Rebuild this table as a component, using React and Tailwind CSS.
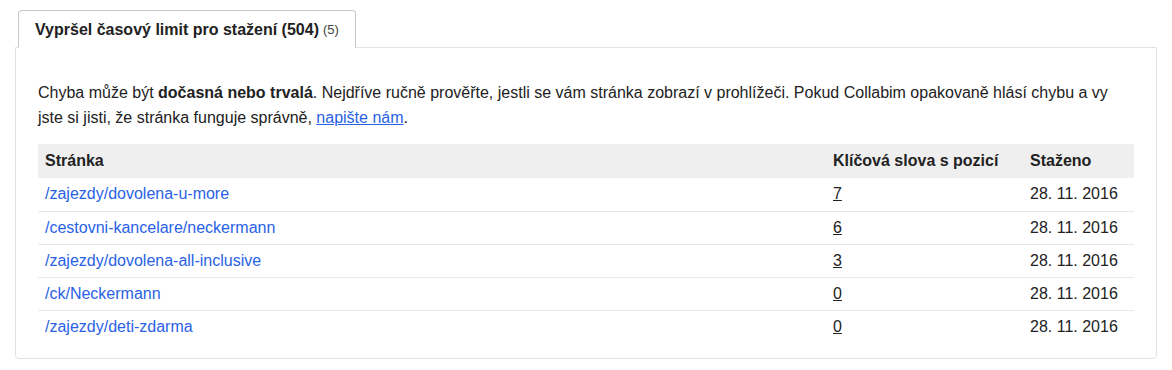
const rows = [
  { page: '/zajezdy/dovolena-u-more', keywords: 7, date: '28. 11. 2016' },
  { page: '/cestovni-kancelare/neckermann', keywords: 6, date: '28. 11. 2016' },
  { page: '/zajezdy/dovolena-all-inclusive', keywords: 3, date: '28. 11. 2016' },
  { page: '/ck/Neckermann', keywords: 0, date: '28. 11. 2016' },
  { page: '/zajezdy/deti-zdarma', keywords: 0, date: '28. 11. 2016' },
];

export default function App() {
  return (
    <div className="min-h-[370px] bg-white px-[15px] pt-[10px] text-[16px] text-[#222] font-['Liberation_Sans',Arial,sans-serif]">
      {/* Tabs */}
      <div className="flex pl-[3px]">
        <div className="relative z-10 -mb-px flex h-[38px] items-center rounded-t-[4px] border border-b-white border-[#c8c8c8] bg-white px-4 pt-px">
          <span className="font-bold">Vypršel časový limit pro stažení (504)</span>
          <span className="ml-1 text-[13px] text-[#444]">(5)</span>
        </div>
      </div>

      {/* Panel */}
      <div className="rounded-b-[4px] border border-[#e2e2e2] px-[22px] pb-[15px] pt-[32px]">
        <p className="leading-[25px]">
          Chyba může být <strong>dočasná nebo trvalá</strong>. Nejdříve ručně prověřte, jestli se vám stránka
          zobrazí v prohlížeči. Pokud Collabim opakovaně hlásí chybu a vy jste si jisti, že stránka funguje
          správně,{' '}
          <a href="#" className="text-[#2a62e6] underline">napište nám</a>.
        </p>

        <table className="mt-[14px] w-full table-fixed border-collapse">
          <colgroup>
            <col />
            <col className="w-[197px]" />
            <col className="w-[111px]" />
          </colgroup>
          <thead>
            <tr className="h-[34px] bg-[#efefef] text-left">
              <th className="px-[7px] font-bold">Stránka</th>
              <th className="px-[7px] font-bold">Klíčová slova s pozicí</th>
              <th className="px-[7px] font-bold">Staženo</th>
            </tr>
          </thead>
          <tbody>
            {rows.map((row, i) => (
              <tr key={row.page} className={`h-[33px] ${i > 0 ? 'border-t border-[#e8e8e8]' : ''}`}>
                <td className="px-[7px]">
                  <a href="#" className="text-[#2a62e6]">{row.page}</a>
                </td>
                <td className="px-[7px]">
                  <a href="#" className="underline">{row.keywords}</a>
                </td>
                <td className="px-[7px]">{row.date}</td>
              </tr>
            ))}
          </tbody>
        </table>
      </div>
    </div>
  );
}
